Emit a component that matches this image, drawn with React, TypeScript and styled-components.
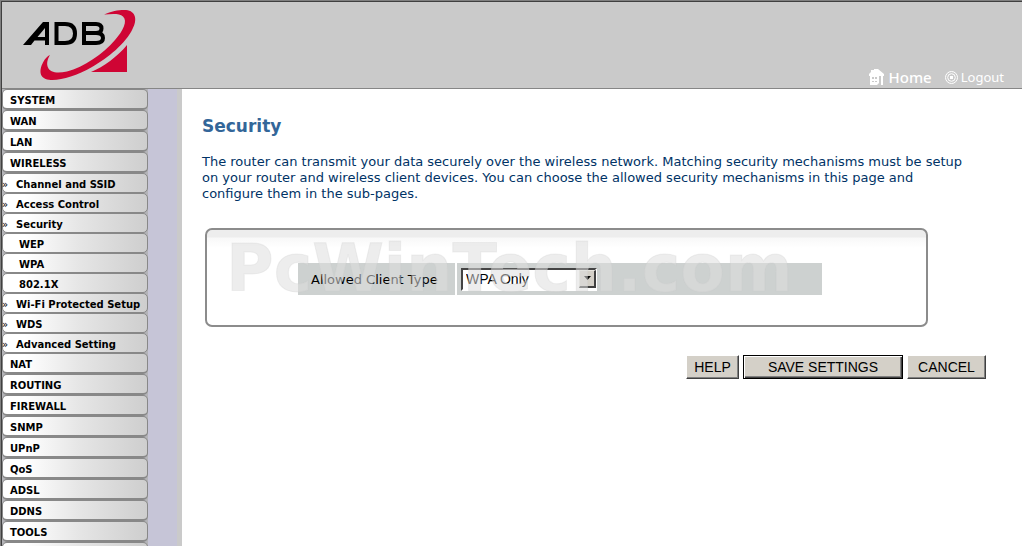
import React from "react";
import styled, { createGlobalStyle, css } from "styled-components";

const GlobalStyle = createGlobalStyle`
  * { box-sizing: border-box; }
  body {
    margin: 0;
    background: #fff;
    font-family: Verdana, "DejaVu Sans", sans-serif;
  }
`;

const Page = styled.div`
  display: flex;
  flex-direction: column;
  height: 100vh;
  overflow: hidden;
  border-top: 1px solid #808080;
  border-left: 1px solid #808080;
`;

const Frame = styled.div`
  flex: 1;
  min-height: 0;
  display: flex;
  flex-direction: column;
  border-top: 1px solid #404040;
  border-left: 1px solid #404040;
`;

const Header = styled.header`
  flex: none;
  display: flex;
  justify-content: space-between;
  align-items: flex-end;
  height: 87px;
  padding: 0 18px 0 20px;
  background: #cacaca;
  border-bottom: 1px solid #868686;
`;

const Logo = styled.svg`
  display: block;
  align-self: flex-start;
  margin-top: 6px;
`;

const HeaderLinks = styled.nav`
  display: flex;
  gap: 13px;
`;

const HeaderLink = styled.a<{ $large?: boolean }>`
  display: flex;
  align-items: center;
  gap: ${(p) => (p.$large ? 4 : 3)}px;
  height: 22px;
  color: #fff;
  font-family: "Noto Sans", sans-serif;
  font-size: ${(p) => (p.$large ? 15 : 13)}px;
  font-weight: ${(p) => (p.$large ? 500 : 400)};
  line-height: 18px;
  text-decoration: none;
`;

const Columns = styled.div`
  flex: 1;
  min-height: 0;
  display: flex;
`;

const Sidebar = styled.nav`
  flex: none;
  width: 180px;
  background: #c6c5d7;
  border-right: 5px solid #cacaca;
`;

const Menu = styled.ul`
  width: 146px;
  margin: 0;
  padding: 0;
  list-style: none;
  background: #b4b4b8;
`;

type Level = 0 | 1 | 2;

const indent = { 0: 7, 1: 13, 2: 16 };

const itemFace = css`
  border: solid #888;
  border-radius: 5px;
  background: linear-gradient(90deg, #fff 0%, #fff 15%, #e6e6e6 52%, #cecece 100%);
`;

const MenuLink = styled.a<{ $level: Level }>`
  ${itemFace}
  position: relative;
  display: block;
  height: ${(p) => (p.$level === 0 ? 21 : 20)}px;
  border-width: 1px 1px ${(p) => (p.$level === 0 ? 2 : 1)}px;
  padding-left: ${(p) => indent[p.$level]}px;
  color: #000;
  font-size: 10px;
  font-weight: bold;
  line-height: 21px;
  white-space: nowrap;
  text-decoration: none;
`;

const Marker = styled.span`
  position: absolute;
  left: -1px;
  top: 0;
  font-size: 10px;
  font-weight: normal;
`;

const Main = styled.main`
  flex: 1;
  min-width: 0;
  padding: 27px 36px 0 20px;
  background: #fff;
`;

const Title = styled.h1`
  margin: 0;
  color: #336699;
  font-size: 17px;
  line-height: 20px;
`;

const Intro = styled.p`
  margin: 18px 0 0;
  padding-right: 8px;
  color: #003366;
  font-size: 13px;
  line-height: 16px;
`;

const Panel = styled.section`
  position: relative;
  height: 99px;
  margin: 26px 58px 0 3px;
  padding: 33px 0 0 91px;
  border: 2px solid #8c8c8c;
  border-radius: 7px;
  background: linear-gradient(#ededed 0, #ededed 7px, #f8f8f8 8px, #fff 18px);
`;

const Field = styled.div`
  display: grid;
  grid-template-columns: 157px 1fr;
  gap: 2px;
  max-width: 524px;
`;

const Cell = styled.div`
  display: flex;
  align-items: center;
  height: 32px;
  background: #cdd1d0;
`;

const FieldLabel = styled.label`
  padding-left: 13px;
  font-size: 13px;
`;

const SelectBox = styled.div`
  position: relative;
  display: flex;
  margin-left: 4px;
`;

const Select = styled.select`
  appearance: none;
  width: 136px;
  height: 23px;
  margin: 0;
  padding: 0 20px 0 3px;
  border: 2px solid;
  border-color: #444 #fff #fff #444;
  border-radius: 0;
  background: #fff;
  color: #000;
  font-family: "Liberation Sans", Arial, sans-serif;
  font-size: 14px;
`;

const SelectArrow = styled.span`
  position: absolute;
  top: 2px;
  right: 1px;
  display: flex;
  align-items: center;
  justify-content: center;
  width: 17px;
  height: 18px;
  border: 1px solid;
  border-right-width: 2px;
  border-bottom-width: 2px;
  border-color: #e8e6e0 #404040 #404040 #e8e6e0;
  background: #d4d0c8;
  pointer-events: none;
`;

const Watermark = styled.span`
  position: absolute;
  left: 19px;
  top: 0;
  color: rgba(222, 222, 222, 0.54);
  font-family: "DejaVu Sans", sans-serif;
  font-size: 65px;
  font-weight: bold;
  line-height: 78px;
  white-space: nowrap;
  -webkit-text-stroke: 1px rgba(205, 205, 205, 0.25);
  pointer-events: none;
`;

const Actions = styled.div`
  display: flex;
  justify-content: flex-end;
  gap: 4px;
  margin-top: 28px;
`;

const Button = styled.button<{ $width: number; $primary?: boolean }>`
  width: ${(p) => p.$width}px;
  height: 24px;
  padding: 0;
  border: 1px solid;
  border-color: ${(p) => (p.$primary ? "#000" : "#fff #404040 #404040 #fff")};
  border-radius: 0;
  background: #d4d0c8;
  box-shadow: ${(p) =>
    p.$primary
      ? "inset 1px 1px #fff, inset -1px -1px #404040, inset -2px -2px #808080"
      : "inset -1px -1px #808080"};
  color: #000;
  font-family: "Liberation Sans", Arial, sans-serif;
  font-size: 14px;
  line-height: 20px;
`;

const menu: { label: string; level: Level }[] = [
  { label: "SYSTEM", level: 0 },
  { label: "WAN", level: 0 },
  { label: "LAN", level: 0 },
  { label: "WIRELESS", level: 0 },
  { label: "Channel and SSID", level: 1 },
  { label: "Access Control", level: 1 },
  { label: "Security", level: 1 },
  { label: "WEP", level: 2 },
  { label: "WPA", level: 2 },
  { label: "802.1X", level: 2 },
  { label: "Wi-Fi Protected Setup", level: 1 },
  { label: "WDS", level: 1 },
  { label: "Advanced Setting", level: 1 },
  { label: "NAT", level: 0 },
  { label: "ROUTING", level: 0 },
  { label: "FIREWALL", level: 0 },
  { label: "SNMP", level: 0 },
  { label: "UPnP", level: 0 },
  { label: "QoS", level: 0 },
  { label: "ADSL", level: 0 },
  { label: "DDNS", level: 0 },
  { label: "TOOLS", level: 0 },
];

const MenuEnd = styled.li`
  ${itemFace}
  height: 21px;
  border-width: 1px 1px 2px;
`;

function AdbLogo() {
  return (
    <Logo width="116" height="74" viewBox="22 8 116 74" role="img" aria-label="ADB">
      <path
        fill="#000"
        fillRule="evenodd"
        d="M23 45 L43 22 H49 V45 H45 V40.500 H34.500 L31 45 Z M37.500 37 H45 V28 Z"
      />
      <g fill="none" stroke="#000" strokeWidth="4">
        <path d="M56.5 24 H65 Q75 24 75 33.5 Q75 43 65 43 H56.5 Z" />
        <path d="M84 24 H96 Q101.500 24 101.500 28.500 Q101.500 33 96 33 H84 M96 33 Q103 33 103 38 Q103 43 96 43 H84 V22" />
      </g>
      <path
        fill="#cf0534"
        d="M104 14.6 C112 10.5 121 9.6 126 10 C136 11 137.500 20 132.500 29 C126 43 108 58 92 67 C76 76 60 81 49 79.800 C39 78.500 39 70 43 62.500 C45 58.500 47.500 56 50 55 C47 60 46.500 64 48 67.500 C50 72.500 57 73.500 67 71.500 C84 67 103 54 115 40 C123 31 128 21 123 16.500 C119.500 13.300 112 14 104 14.600 Z"
      />
      <path fill="#cf0534" d="M127 45 V72 H91 C104 66.500 117 57 127 45 Z" />
    </Logo>
  );
}

function HomeIcon() {
  return (
    <svg width="16" height="17" viewBox="0 0 16 17" aria-hidden="true">
      <path
        fill="#fff"
        fillRule="evenodd"
        d="M2 1 H5 V0 H9 L15 5 V7 H14 V16 H12 V7 H10 V14 L8 16 H1 V7 H0 V5 L2 3 Z M3 8 V10 H5 V8 Z M6 8 V10 H8 V8 Z M3 12 V13 H5 V12 Z M6 12 V13 H8 V12 Z"
      />
    </svg>
  );
}

function LogoutIcon() {
  return (
    <svg width="13" height="13" viewBox="0 0 13 13" fill="none" stroke="#fff" aria-hidden="true">
      <circle cx="6.5" cy="6.5" r="6" />
      <circle cx="6.5" cy="6.5" r="3.800" />
      <rect x="5" y="5" width="3" height="3" fill="#fff" stroke="none" />
    </svg>
  );
}

export default function App() {
  return (
    <>
      <GlobalStyle />
      <Page>
        <Frame>
          <Header>
            <AdbLogo />
            <HeaderLinks>
              <HeaderLink href="#home" $large>
                <HomeIcon />
                Home
              </HeaderLink>
              <HeaderLink href="#logout">
                <LogoutIcon />
                Logout
              </HeaderLink>
            </HeaderLinks>
          </Header>
          <Columns>
            <Sidebar>
              <Menu>
                {menu.map(({ label, level }) => (
                  <li key={label}>
                    <MenuLink href={`#${label}`} $level={level}>
                      {level === 1 && <Marker aria-hidden="true">»</Marker>}
                      {label}
                    </MenuLink>
                  </li>
                ))}
                <MenuEnd aria-hidden="true" />
              </Menu>
            </Sidebar>
            <Main>
              <Title>Security</Title>
              <Intro>
                The router can transmit your data securely over the wireless network. Matching
                security mechanisms must be setup on your router and wireless client devices. You
                can choose the allowed security mechanisms in this page and configure them in the
                sub-pages.
              </Intro>
              <Panel>
                <Field>
                  <Cell>
                    <FieldLabel htmlFor="client-type">Allowed Client Type</FieldLabel>
                  </Cell>
                  <Cell>
                    <SelectBox>
                      <Select id="client-type" defaultValue="WPA Only">
                        <option>WPA Only</option>
                      </Select>
                      <SelectArrow>
                        <svg width="7" height="4" viewBox="0 0 7 4" aria-hidden="true">
                          <path d="M0 0 H7 L3.500 4 Z" fill="#000" />
                        </svg>
                      </SelectArrow>
                    </SelectBox>
                  </Cell>
                </Field>
                <Watermark>PcWinTech.com</Watermark>
              </Panel>
              <Actions>
                <Button type="button" $width={53}>HELP</Button>
                <Button type="submit" $width={160} $primary>SAVE SETTINGS</Button>
                <Button type="button" $width={79}>CANCEL</Button>
              </Actions>
            </Main>
          </Columns>
        </Frame>
      </Page>
    </>
  );
}
